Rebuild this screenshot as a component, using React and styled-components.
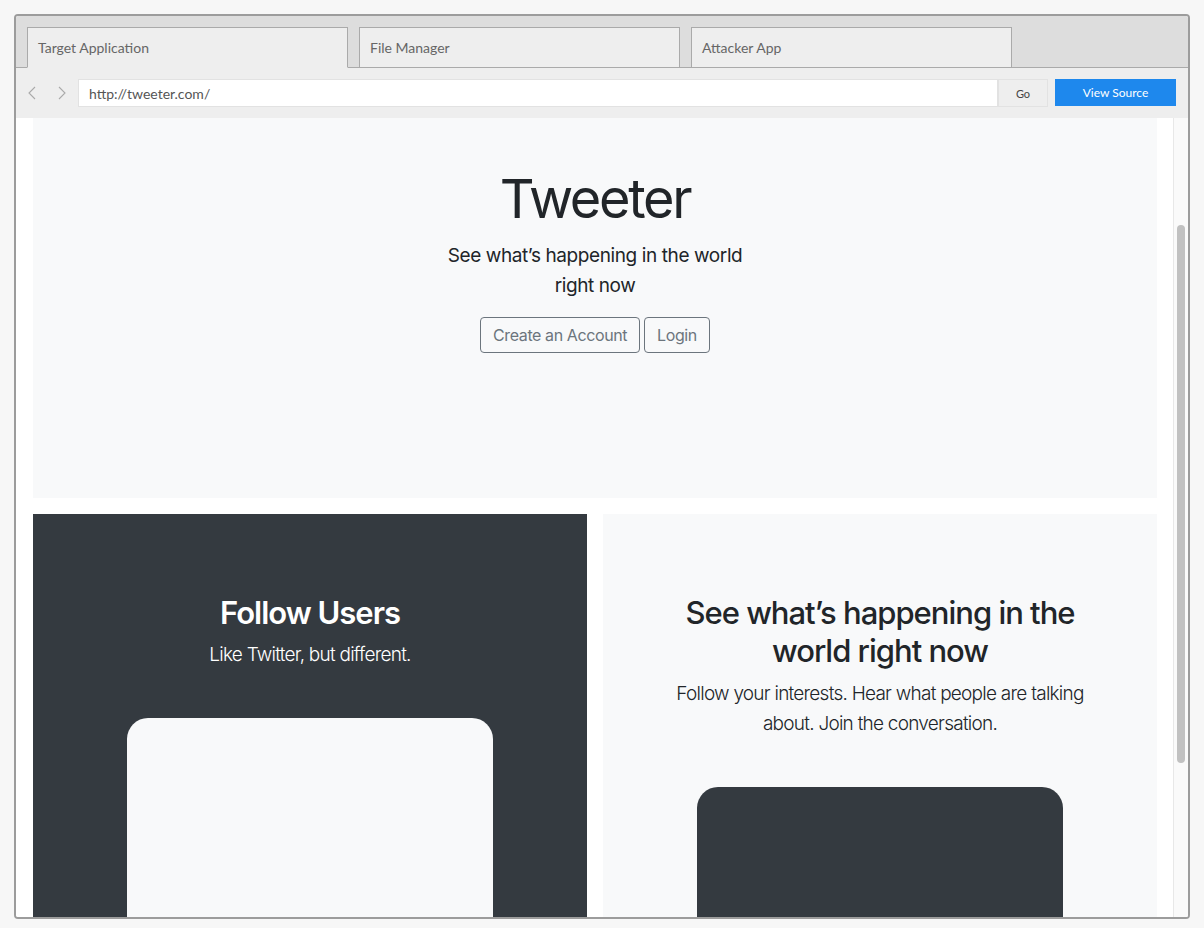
import React from 'react'
import styled, { createGlobalStyle } from 'styled-components'

const GlobalStyle = createGlobalStyle`
  html, body {
    margin: 0;
    padding: 0;
    background: #f7f7f7;
  }
  * {
    box-sizing: border-box;
  }
`

const chromeFont = `'Lato', 'Open Sans', sans-serif`
const siteFont = `'Inter', 'Roboto', sans-serif`

const Frame = styled.div`
  margin: 14px;
  width: 1176px;
  height: 905px;
  border: 2px solid #9c9c9c;
  border-radius: 4px;
  overflow: hidden;
  display: flex;
  flex-direction: column;
  background: #fff;
`

const TabBar = styled.div`
  height: 52px;
  flex-shrink: 0;
  background: #dddddd;
  display: flex;
  align-items: flex-end;
  gap: 11px;
  padding-left: 11px;
  border-bottom: 1px solid #aaaaaa;
`

const Tab = styled.div`
  width: 321px;
  height: 41px;
  margin-bottom: -1px;
  background: #eeeeee;
  border: 1px solid #aaaaaa;
  border-bottom-color: ${({ active }) => (active ? '#eeeeee' : '#aaaaaa')};
  display: flex;
  align-items: center;
  padding: 0 10px;
  font-family: ${chromeFont};
  font-size: 14px;
  color: #666;
`

const Toolbar = styled.div`
  height: 50px;
  flex-shrink: 0;
  background: #eeeeee;
  display: flex;
  align-items: center;
  padding: 0 12px 0 1px;
`

const NavButton = styled.div`
  width: 30px;
  height: 26px;
  display: flex;
  align-items: center;
  justify-content: center;
  color: #aaa;
`

const UrlInput = styled.div`
  margin-left: 1px;
  flex: 1;
  height: 28px;
  background: #fff;
  border: 1px solid #e2e2e2;
  display: flex;
  align-items: center;
  padding-left: 10px;
  font-family: ${chromeFont};
  font-size: 14px;
  color: #555;
`

const GoButton = styled.div`
  width: 50px;
  height: 28px;
  background: #eeeeee;
  border: 1px solid #e2e2e2;
  display: flex;
  align-items: center;
  justify-content: center;
  font-family: ${chromeFont};
  font-size: 11px;
  color: #444;
`

const SourceButton = styled.div`
  margin-left: 7px;
  width: 121px;
  height: 27px;
  margin-top: -1px;
  background: #1e88ed;
  display: flex;
  align-items: center;
  justify-content: center;
  font-family: ${chromeFont};
  font-size: 12px;
  color: #fff;
`

const Viewport = styled.div`
  flex: 1;
  display: flex;
  overflow: hidden;
  background: #fff;
`

const Page = styled.div`
  flex: 1;
  padding: 0 16px 0 17px;
  overflow: hidden;
  font-family: ${siteFont};
  color: #212529;
`

const Hero = styled.section`
  height: 380px;
  background: #f8f9fa;
  display: flex;
  flex-direction: column;
  align-items: center;
  padding-top: 48px;
  text-align: center;
`

const HeroTitle = styled.h1`
  margin: 0 0 10px;
  font-size: 54px;
  font-weight: 400;
  line-height: 65px;
  letter-spacing: -2.3px;
`

const Lead = styled.p`
  margin: 0 0 16px;
  max-width: ${({ narrow }) => (narrow ? '320px' : 'none')};
  font-size: 19px;
  font-weight: ${({ thin }) => (thin ? 300 : 400)};
  line-height: 30px;
  letter-spacing: ${({ thin }) => (thin ? '-0.75px' : '-0.4px')};
  color: ${({ light }) => (light ? '#fff' : '#212529')};
`

const ButtonRow = styled.div`
  display: flex;
  gap: 4px;
`

const OutlineButton = styled.button`
  height: 36px;
  padding: 0 12px;
  background: transparent;
  border: 1px solid #6c757d;
  border-radius: 4px;
  font-family: ${siteFont};
  font-size: 16px;
  letter-spacing: -0.4px;
  color: #6c757d;
`

const Columns = styled.div`
  margin-top: 16px;
  display: grid;
  grid-template-columns: 1fr 1fr;
  gap: 16px;
`

const Feature = styled.section`
  height: 420px;
  background: ${({ dark }) => (dark ? '#343a40' : '#f8f9fa')};
  padding: 48px 48px 0;
  text-align: center;
  overflow: hidden;
`

const FeatureText = styled.div`
  margin: 16px 0;
  padding: 16px 0;
`

const FeatureTitle = styled.h2`
  margin: 0 0 8px;
  font-size: 31px;
  font-weight: ${({ light }) => (light ? 600 : 500)};
  line-height: 38.4px;
  letter-spacing: -1px;
  color: ${({ light }) => (light ? '#fff' : '#212529')};
`

const Device = styled.div`
  width: 80%;
  height: 300px;
  margin: 0 auto;
  border-radius: 21px 21px 0 0;
  background: ${({ dark }) => (dark ? '#343a40' : '#f8f9fa')};
`

const ScrollTrack = styled.div`
  width: 15px;
  flex-shrink: 0;
  background: #fafafa;
  border-left: 1px solid #e8e8e8;
  padding: 107px 0 0 3px;
`

const ScrollThumb = styled.div`
  width: 8px;
  height: 538px;
  border-radius: 4px;
  background: #c1c1c1;
`

const Chevron = ({ dir }) => (
  <svg width="8" height="14" viewBox="0 0 8 14" fill="none">
    <polyline
      points={dir === 'left' ? '7,1 1,7 7,13' : '1,1 7,7 1,13'}
      stroke="currentColor"
      strokeWidth="1.1"
    />
  </svg>
)

const tabs = ['Target Application', 'File Manager', 'Attacker App']

export default function App() {
  return (
    <>
      <GlobalStyle />
      <Frame>
        <TabBar>
          {tabs.map((t, i) => (
            <Tab key={t} active={i === 0}>{t}</Tab>
          ))}
        </TabBar>
        <Toolbar>
          <NavButton><Chevron dir="left" /></NavButton>
          <NavButton><Chevron dir="right" /></NavButton>
          <UrlInput>http://tweeter.com/</UrlInput>
          <GoButton>Go</GoButton>
          <SourceButton>View Source</SourceButton>
        </Toolbar>
        <Viewport>
          <Page>
            <Hero>
              <HeroTitle>Tweeter</HeroTitle>
              <Lead narrow>See what’s happening in the world right now</Lead>
              <ButtonRow>
                <OutlineButton>Create an Account</OutlineButton>
                <OutlineButton>Login</OutlineButton>
              </ButtonRow>
            </Hero>
            <Columns>
              <Feature dark>
                <FeatureText>
                  <FeatureTitle light>Follow Users</FeatureTitle>
                  <Lead light thin>Like Twitter, but different.</Lead>
                </FeatureText>
                <Device />
              </Feature>
              <Feature>
                <FeatureText>
                  <FeatureTitle>See what’s happening in the world right now</FeatureTitle>
                  <Lead thin>Follow your interests. Hear what people are talking about. Join the conversation.</Lead>
                </FeatureText>
                <Device dark />
              </Feature>
            </Columns>
          </Page>
          <ScrollTrack>
            <ScrollThumb />
          </ScrollTrack>
        </Viewport>
      </Frame>
    </>
  )
}
